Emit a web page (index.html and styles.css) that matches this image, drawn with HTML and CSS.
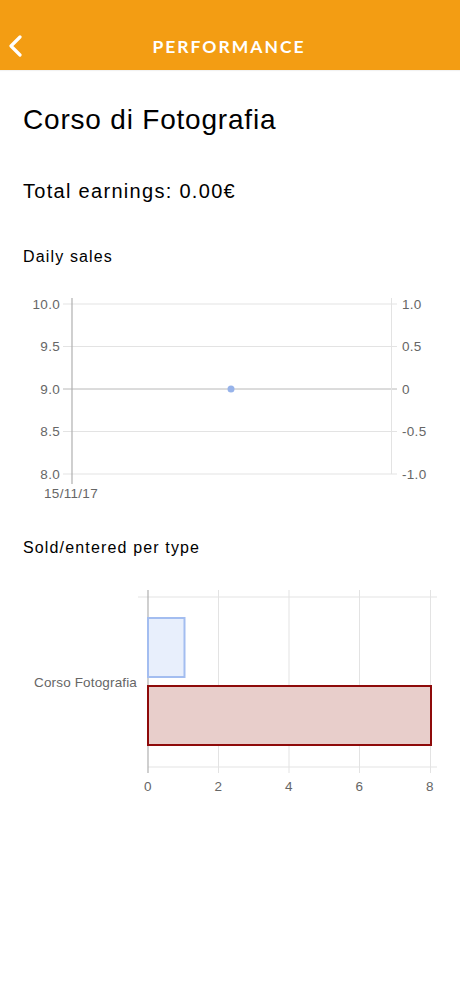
FILE: index.html
```html
<!DOCTYPE html>
<html lang="it">
<head>
<meta charset="utf-8">
<title>Performance</title>
<link rel="stylesheet" href="styles.css">
</head>
<body>
<header class="topbar">
  <button class="back" aria-label="Back">
    <svg width="16" height="22" viewBox="0 0 16 22"><path d="M13 2 L4 11 L13 20" fill="none" stroke="#fff" stroke-width="3.2" stroke-linecap="round" stroke-linejoin="round"/></svg>
  </button>
  <div class="title">PERFORMANCE</div>
</header>
<main class="content">
  <h1 class="course">Corso di Fotografia</h1>
  <h2 class="earnings">Total earnings: 0.00€</h2>
  <h3 class="section daily">Daily sales</h3>
  <svg class="chart chart-line" width="460" height="220" viewBox="0 290 460 220">
    <g class="grid">
      <line x1="63" y1="304" x2="397" y2="304"/>
      <line x1="63" y1="346.5" x2="397" y2="346.5"/>
      <line x1="63" y1="431.5" x2="397" y2="431.5"/>
      <line x1="63" y1="474" x2="397" y2="474"/>
    </g>
    <line class="zero" x1="63" y1="389" x2="397" y2="389"/>
    <line class="axis" x1="72" y1="298" x2="72" y2="484"/>
    <line class="axis-light" x1="391.5" y1="298" x2="391.5" y2="474"/>
    <g class="lbl lbl-left">
      <text x="60" y="308.5">10.0</text>
      <text x="60" y="351">9.5</text>
      <text x="60" y="393.5">9.0</text>
      <text x="60" y="436">8.5</text>
      <text x="60" y="478.5">8.0</text>
    </g>
    <g class="lbl">
      <text x="402" y="308.5">1.0</text>
      <text x="402" y="351">0.5</text>
      <text x="402" y="393.5">0</text>
      <text x="402" y="436">-0.5</text>
      <text x="402" y="478.5">-1.0</text>
    </g>
    <text class="lbl lbl-mid" x="71" y="498">15/11/17</text>
    <circle cx="231" cy="389" r="3.5" fill="#97b3ea"/>
  </svg>
  <h3 class="section sold">Sold/entered per type</h3>
  <svg class="chart chart-bar" width="460" height="220" viewBox="0 580 460 220">
    <g class="grid">
      <line x1="138" y1="597" x2="437" y2="597"/>
      <line x1="148" y1="767" x2="437" y2="767"/>
      <line x1="218.5" y1="590" x2="218.5" y2="773"/>
      <line x1="289" y1="590" x2="289" y2="773"/>
      <line x1="359.5" y1="590" x2="359.5" y2="773"/>
      <line x1="430.5" y1="590" x2="430.5" y2="773"/>
    </g>
    <line class="axis" x1="148" y1="590" x2="148" y2="773"/>
    <rect x="148" y="618" width="36.5" height="59" fill="#e8effc" stroke="#a3bdf0" stroke-width="2"/>
    <rect x="148" y="686" width="283" height="59" fill="#e8cecb" stroke="#8e0a0a" stroke-width="2"/>
    <text class="lbl lbl-left tight" x="137" y="686.5">Corso Fotografia</text>
    <g class="lbl lbl-mid">
      <text x="148" y="791">0</text>
      <text x="218.5" y="791">2</text>
      <text x="289" y="791">4</text>
      <text x="359.5" y="791">6</text>
      <text x="430" y="791">8</text>
    </g>
  </svg>
</main>
</body>
</html>
```

FILE: styles.css
```css
html, body {
  margin: 0;
  padding: 0;
  background: #fff;
}
body {
  width: 460px;
  font-family: "Liberation Sans", Arial, Helvetica, sans-serif;
  color: #000;
}
.topbar {
  position: relative;
  height: 70px;
  background: #f39d13;
  display: flex;
  align-items: center;
  justify-content: center;
  box-shadow: 0 1px 1px rgba(0,0,0,0.05);
}
.back {
  position: absolute;
  left: 7px;
  top: 35px;
  width: 18px;
  height: 24px;
  padding: 0;
  border: 0;
  background: none;
  display: flex;
}
.title {
  font-family: Lato, "Open Sans", sans-serif;
  font-weight: 700;
  font-size: 17.5px;
  letter-spacing: 2px;
  color: #fff;
  margin-top: 23px;
  padding-left: 0;
  margin-right: 2px;
}
.content {
  display: flex;
  flex-direction: column;
}
.course {
  margin: 35px 0 0 23px;
  font-weight: 400;
  font-size: 28px;
  line-height: 30px;
  letter-spacing: 0.8px;
}
.earnings {
  margin: 44px 0 0 23px;
  font-weight: 400;
  font-size: 20px;
  line-height: 24px;
  letter-spacing: 1.3px;
}
.section {
  margin: 0 0 0 23px;
  font-weight: 400;
  font-size: 16px;
  line-height: 20px;
  letter-spacing: 1.15px;
}
.daily { margin-top: 44px; }
.sold { margin-top: 28px; }
.chart { display: block; }
.chart-line { margin-top: 23px; }
.chart-bar { margin-top: 22px; }
.grid line { stroke: #e3e3e3; stroke-width: 1; }
.zero { stroke: #b8b8b8; stroke-width: 1; }
.axis { stroke: #b0b0b0; stroke-width: 1.2; }
.axis-light { stroke: #e3e3e3; stroke-width: 1; }
.lbl {
  font-family: "Liberation Sans", Arial, Helvetica, sans-serif;
  font-size: 13.5px;
  letter-spacing: 0.3px;
  fill: #666;
}
.lbl.tight { letter-spacing: 0.15px; }
.lbl-left text, text.lbl-left { text-anchor: end; }
.lbl-mid text, text.lbl-mid { text-anchor: middle; }
```
